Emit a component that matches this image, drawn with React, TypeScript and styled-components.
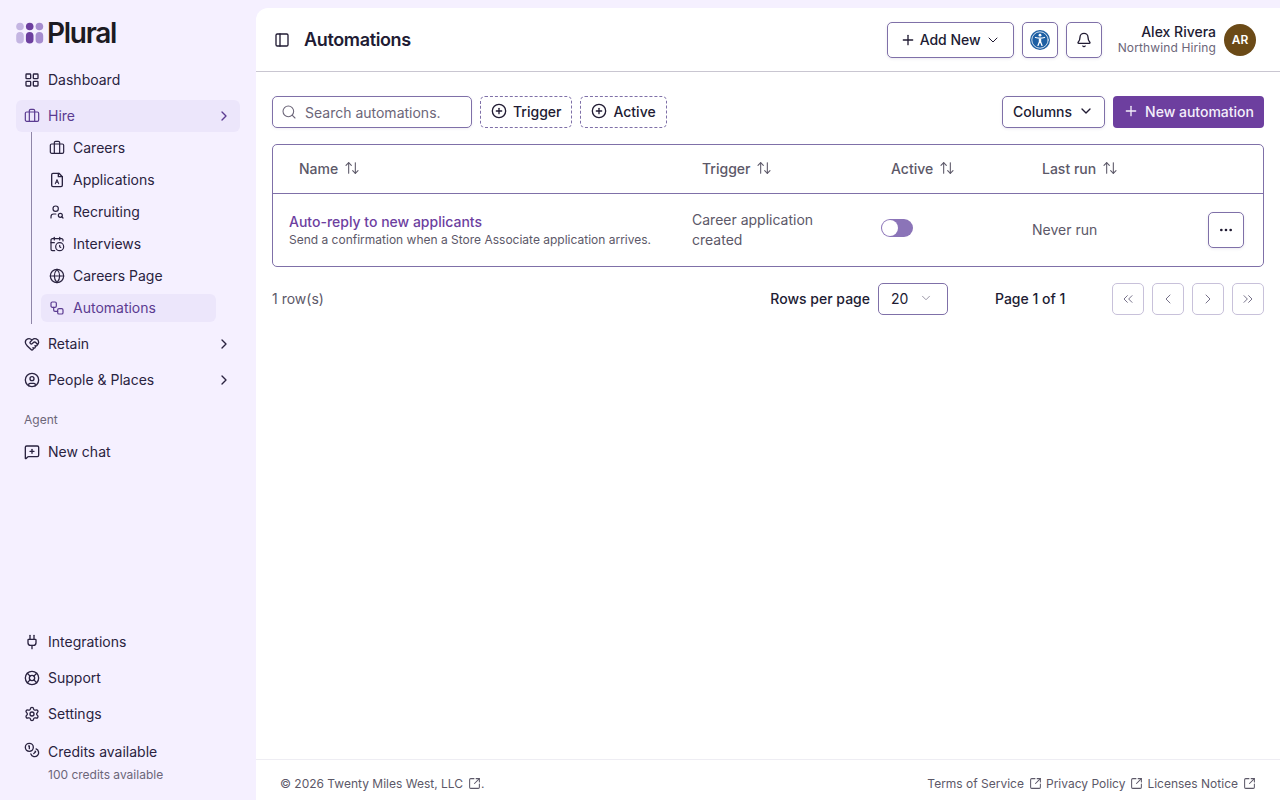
import styled, { createGlobalStyle } from "styled-components";
import {
  ArrowUpDown,
  Bell,
  Briefcase,
  CalendarClock,
  ChevronDown,
  ChevronLeft,
  ChevronRight,
  ChevronsLeft,
  ChevronsRight,
  CirclePlus,
  CircleUser,
  Coins,
  Ellipsis,
  Globe,
  HeartHandshake,
  LayoutGrid,
  LifeBuoy,
  MessageSquarePlus,
  PanelLeft,
  Plug,
  Plus,
  Search,
  Settings,
  SquareArrowOutUpRight,
  UserSearch,
  Workflow,
} from "lucide-react";

const GlobalStyle = createGlobalStyle`
  html, body {
    margin: 0;
    height: 100%;
    overflow: hidden;
    background: #f5f0ff;
    font-family: Inter, "Noto Sans", sans-serif;
    color: #211b33;
  }
  * { box-sizing: border-box; }
`;

const Shell = styled.div`
  display: flex;
  width: 1280px;
  height: 800px;
`;

const Sidebar = styled.aside`
  width: 256px;
  flex: none;
  display: flex;
  flex-direction: column;
  padding: 0 16px;
`;

const LogoRow = styled.div`
  height: 64px;
  display: flex;
  align-items: center;
  gap: 3px;
  padding-top: 2px;
`;

const LogoText = styled.span`
  font-size: 28px;
  font-weight: 600;
  letter-spacing: -1.3px;
  color: #1c1a22;
`;

const Nav = styled.nav`
  display: flex;
  flex-direction: column;
  gap: 4px;
`;

const NavItem = styled.a<{ $active?: boolean }>`
  height: 32px;
  display: flex;
  align-items: center;
  gap: 8px;
  padding: 0 8px;
  border-radius: 6px;
  font-size: 14px;
  color: ${(p) => (p.$active ? "#5b3b91" : "#2a2340")};
  background: ${(p) => (p.$active ? "#ece6fb" : "transparent")};
`;

const NavLabel = styled.span`
  flex: 1;
  margin-top: -2px;
`;

const SubList = styled.div`
  margin: -4px 24px 0 15px;
  padding: 2px 0 2px 9px;
  border-left: 1px solid #8f86a8;
  display: flex;
  flex-direction: column;
  gap: 4px;
`;

const SubItem = styled(NavItem)`
  height: 28px;
`;

const GroupLabel = styled.div`
  font-size: 12px;
  color: #6c6679;
  padding: 0 8px 5px;
  height: 32px;
  display: flex;
  align-items: flex-end;
`;

const Spacer = styled.div`
  flex: 1;
`;

const CreditsBlock = styled.div`
  padding: 12px 8px 17px;
  display: grid;
  grid-template-columns: 16px 1fr;
  column-gap: 8px;
  row-gap: 5px;
`;

const CreditsIcon = styled.div`
  color: #2a2340;
  height: 20px;
`;

const CreditsTitle = styled.div`
  font-size: 14px;
  line-height: 20px;
  color: #2a2340;
`;

const CreditsSub = styled.div`
  grid-column: 2;
  font-size: 12px;
  line-height: 16px;
  color: #6c6679;
`;

const Main = styled.main`
  flex: 1;
  margin-top: 8px;
  background: #fff;
  border-top-left-radius: 12px;
  display: flex;
  flex-direction: column;
  min-width: 0;
`;

const Header = styled.header`
  height: 64px;
  flex: none;
  display: flex;
  align-items: center;
  padding: 0 24px 0 18px;
  border-bottom: 1px solid #c9c6d1;
`;

const Title = styled.h1`
  margin: 0 0 0 14px;
  flex: 1;
  font-size: 18px;
  line-height: 1;
  font-weight: 600;
  letter-spacing: -0.36px;
  color: #211b33;
`;

const OutlineButton = styled.button`
  height: 36px;
  display: inline-flex;
  align-items: center;
  justify-content: center;
  gap: 4px;
  padding: 0 12px;
  background: #fff;
  border: 1px solid #7f70a8;
  border-radius: 5px;
  box-shadow: 0 1px 3px rgba(60, 40, 110, 0.1);
  font: 500 14px Inter, sans-serif;
  color: #211b33;
`;

const HeaderIconButton = styled(OutlineButton)`
  width: 36px;
  padding: 0;
  margin-left: 8px;
`;

const UserBlock = styled.div`
  margin-left: 16px;
  display: flex;
  align-items: center;
  gap: 8px;
`;

const UserText = styled.div`
  text-align: right;
`;

const UserName = styled.div`
  font-size: 14px;
  line-height: 16px;
  font-weight: 500;
  color: #211b33;
`;

const UserOrg = styled.div`
  font-size: 12px;
  line-height: 15px;
  letter-spacing: 0.12px;
  color: #6c6679;
`;

const Avatar = styled.div`
  width: 32px;
  height: 32px;
  border-radius: 50%;
  background: #6b4a17;
  color: #fff;
  font-size: 12px;
  font-weight: 600;
  display: flex;
  align-items: center;
  justify-content: center;
`;

const Content = styled.section`
  flex: 1;
  padding: 24px 16px 0;
  display: flex;
  flex-direction: column;
`;

const Toolbar = styled.div`
  display: flex;
  align-items: center;
  gap: 8px;
  height: 32px;
`;

const SearchBox = styled.div`
  width: 200px;
  height: 32px;
  display: flex;
  align-items: center;
  gap: 8px;
  padding: 0 8px;
  border: 1px solid #7f70a8;
  border-radius: 5px;
  box-shadow: 0 1px 3px rgba(60, 40, 110, 0.08);
  font-size: 14px;
  color: #6c6679;
`;

const FilterButton = styled.button`
  height: 32px;
  display: inline-flex;
  align-items: center;
  gap: 6px;
  padding: 0 10px 2px;
  background: #fff;
  border: 1px dashed #7f70a8;
  border-radius: 5px;
  font: 500 14px Inter, sans-serif;
  color: #211b33;
`;

const ToolbarGap = styled.div`
  flex: 1;
`;

const ColumnsButton = styled(OutlineButton)`
  height: 32px;
  padding: 0 10px 2px;
  gap: 6px;
`;

const PrimaryButton = styled.button`
  height: 32px;
  display: inline-flex;
  align-items: center;
  gap: 6px;
  padding: 0 10px 2px;
  border: none;
  border-radius: 4px;
  background: #6d3f9f;
  color: #f4effb;
  font: 500 14px Inter, sans-serif;
`;

const TableCard = styled.div`
  margin-top: 16px;
  border: 1px solid #7f70a8;
  border-radius: 5px;
`;

const HeadRow = styled.div`
  display: grid;
  grid-template-columns: 403px 189px 151px 1fr;
  height: 49px;
  padding-bottom: 2px;
  align-items: center;
  border-bottom: 1px solid #7f70a8;
`;

const HeadCell = styled.div`
  display: flex;
  align-items: center;
  gap: 6px;
  padding-left: 26px;
  font-size: 14px;
  font-weight: 500;
  color: #5c5868;
`;

const BodyRow = styled.div`
  display: grid;
  grid-template-columns: 403px 189px 151px 1fr;
  height: 72px;
  align-items: center;
`;

const Cell = styled.div`
  padding-left: 16px;
  font-size: 14px;
  line-height: 20px;
  color: #5c5868;
`;

const LastCell = styled(Cell)`
  display: flex;
  align-items: center;
  justify-content: space-between;
  padding-right: 19px;
`;

const RowLink = styled.div`
  font-size: 14px;
  line-height: 18px;
  font-weight: 500;
  color: #6d3f9f;
`;

const RowDesc = styled.div`
  margin-top: 1px;
  font-size: 12px;
  line-height: 16px;
  color: #5c5868;
`;

const Toggle = styled.div`
  width: 32px;
  height: 18px;
  margin-top: -5px;
  border-radius: 9px;
  background: #8b74b8;
  padding: 1px;
`;

const ToggleKnob = styled.div`
  width: 16px;
  height: 16px;
  border-radius: 50%;
  background: #fff;
`;

const RowAction = styled(OutlineButton)`
  width: 36px;
  padding: 0;
`;

const Pager = styled.div`
  margin-top: 16px;
  height: 32px;
  display: flex;
  align-items: center;
  font-size: 14px;
  color: #5c5868;
`;

const RowCount = styled.div`
  flex: 1;
  margin-top: -2px;
`;

const PagerLabel = styled.div`
  margin-top: -2px;
  font-weight: 500;
  color: #211b33;
`;

const RowsSelect = styled.div`
  width: 70px;
  height: 32px;
  margin-left: 8px;
  display: flex;
  align-items: center;
  justify-content: space-between;
  padding: 0 14px 2px 12px;
  border: 1px solid #7f70a8;
  border-radius: 5px;
  color: #211b33;
`;

const PageLabel = styled(PagerLabel)`
  width: 70px;
  margin-left: 47px;
  margin-right: 47px;
  white-space: nowrap;
`;

const PageButtons = styled.div`
  display: flex;
  gap: 8px;
`;

const PageButton = styled.button`
  width: 32px;
  height: 32px;
  display: flex;
  align-items: center;
  justify-content: center;
  padding: 0;
  background: #fff;
  border: 1px solid #c8c1da;
  border-radius: 5px;
  color: #77728a;
`;

const Footer = styled.footer`
  height: 41px;
  flex: none;
  display: flex;
  align-items: center;
  justify-content: space-between;
  padding: 6px 24px 0;
  border-top: 1px solid #eeedf3;
  font-size: 12px;
  color: #5c5868;
`;

const FooterLinks = styled.div`
  display: flex;
  gap: 4px;
`;

const FooterLink = styled.span`
  display: inline-flex;
  align-items: center;
  gap: 5px;
`;

const FooterCopy = styled.div`
  display: flex;
  align-items: center;
`;

function LogoMark() {
  const colors = ["#c4b5e2", "#6d3f9f", "#a68ccf"];
  return (
    <svg width="28" height="24" viewBox="0 0 28 24">
      {colors.map((c, i) => (
        <g key={c} fill={c}>
          <circle cx={4 + i * 9.7} cy={5.5} r={3.8} />
          <rect x={0.2 + i * 9.7} y={11} width={7.6} height={11.5} rx={3.8} />
        </g>
      ))}
    </svg>
  );
}

function FileLetterIcon() {
  return (
    <svg width="16" height="16" viewBox="0 0 24 24" fill="none" stroke="currentColor" strokeWidth="2" strokeLinecap="round" strokeLinejoin="round">
      <path d="M15 2H6a2 2 0 0 0-2 2v16a2 2 0 0 0 2 2h12a2 2 0 0 0 2-2V7z" />
      <path d="M14 2v5h6" />
      <path d="M9.5 17.5 12 11.5l2.5 6M10.4 15.5h3.2" strokeWidth="1.6" />
    </svg>
  );
}

function AccessibilityIcon() {
  return (
    <svg width="20" height="20" viewBox="0 0 20 20" fill="none" stroke="#fff" strokeLinecap="round">
      <circle cx="10" cy="10" r="10" fill="#1d5fa3" stroke="none" />
      <circle cx="10" cy="10" r="8.2" strokeWidth="0.8" />
      <circle cx="10" cy="5.2" r="1.4" fill="#fff" stroke="none" />
      <path d="M5.5 7.5Q10 8.9 14.5 7.5" strokeWidth="1.3" />
      <path d="M10 8.6V11.6" strokeWidth="2.4" strokeLinecap="butt" />
      <path d="M9.6 11.5 8 15.4M10.4 11.5 12 15.4" strokeWidth="1.3" />
    </svg>
  );
}

const Sort = () => <ArrowUpDown size={16} strokeWidth={1.6} />;
const Ext = () => <SquareArrowOutUpRight size={13} strokeWidth={1.9} />;

export default function App() {
  return (
    <>
      <GlobalStyle />
      <Shell>
        <Sidebar>
          <LogoRow>
            <LogoMark />
            <LogoText>Plural</LogoText>
          </LogoRow>
          <Nav>
            <NavItem>
              <LayoutGrid size={16} />
              <NavLabel>Dashboard</NavLabel>
            </NavItem>
            <NavItem $active>
              <Briefcase size={16} strokeWidth={1.8} />
              <NavLabel>Hire</NavLabel>
              <ChevronRight size={16} />
            </NavItem>
            <SubList>
              <SubItem>
                <Briefcase size={16} strokeWidth={1.8} />
                <NavLabel>Careers</NavLabel>
              </SubItem>
              <SubItem>
                <FileLetterIcon />
                <NavLabel>Applications</NavLabel>
              </SubItem>
              <SubItem>
                <UserSearch size={16} strokeWidth={1.8} />
                <NavLabel>Recruiting</NavLabel>
              </SubItem>
              <SubItem>
                <CalendarClock size={16} strokeWidth={1.8} />
                <NavLabel>Interviews</NavLabel>
              </SubItem>
              <SubItem>
                <Globe size={16} strokeWidth={1.8} />
                <NavLabel>Careers Page</NavLabel>
              </SubItem>
              <SubItem $active>
                <Workflow size={16} strokeWidth={1.8} />
                <NavLabel>Automations</NavLabel>
              </SubItem>
            </SubList>
            <NavItem>
              <HeartHandshake size={16} />
              <NavLabel>Retain</NavLabel>
              <ChevronRight size={16} />
            </NavItem>
            <NavItem>
              <CircleUser size={16} />
              <NavLabel>People &amp; Places</NavLabel>
              <ChevronRight size={16} />
            </NavItem>
            <GroupLabel>Agent</GroupLabel>
            <NavItem>
              <MessageSquarePlus size={16} />
              <NavLabel>New chat</NavLabel>
            </NavItem>
          </Nav>
          <Spacer />
          <Nav>
            <NavItem>
              <Plug size={16} />
              <NavLabel>Integrations</NavLabel>
            </NavItem>
            <NavItem>
              <LifeBuoy size={16} />
              <NavLabel>Support</NavLabel>
            </NavItem>
            <NavItem>
              <Settings size={16} />
              <NavLabel>Settings</NavLabel>
            </NavItem>
          </Nav>
          <CreditsBlock>
            <CreditsIcon>
              <Coins size={16} />
            </CreditsIcon>
            <CreditsTitle>Credits available</CreditsTitle>
            <CreditsSub>100 credits available</CreditsSub>
          </CreditsBlock>
        </Sidebar>
        <Main>
          <Header>
            <PanelLeft size={16} />
            <Title>Automations</Title>
            <OutlineButton>
              <Plus size={16} />
              Add New
              <ChevronDown size={16} strokeWidth={1.5} />
            </OutlineButton>
            <HeaderIconButton aria-label="Accessibility">
              <AccessibilityIcon />
            </HeaderIconButton>
            <HeaderIconButton aria-label="Notifications">
              <Bell size={16} />
            </HeaderIconButton>
            <UserBlock>
              <UserText>
                <UserName>Alex Rivera</UserName>
                <UserOrg>Northwind Hiring</UserOrg>
              </UserText>
              <Avatar>AR</Avatar>
            </UserBlock>
          </Header>
          <Content>
            <Toolbar>
              <SearchBox>
                <Search size={16} strokeWidth={1.6} />
                Search automations.
              </SearchBox>
              <FilterButton>
                <CirclePlus size={16} />
                Trigger
              </FilterButton>
              <FilterButton>
                <CirclePlus size={16} />
                Active
              </FilterButton>
              <ToolbarGap />
              <ColumnsButton>
                Columns
                <ChevronDown size={16} />
              </ColumnsButton>
              <PrimaryButton>
                <Plus size={16} />
                New automation
              </PrimaryButton>
            </Toolbar>
            <TableCard>
              <HeadRow>
                <HeadCell>
                  Name <Sort />
                </HeadCell>
                <HeadCell>
                  Trigger <Sort />
                </HeadCell>
                <HeadCell>
                  Active <Sort />
                </HeadCell>
                <HeadCell>
                  Last run <Sort />
                </HeadCell>
              </HeadRow>
              <BodyRow>
                <Cell>
                  <RowLink>Auto-reply to new applicants</RowLink>
                  <RowDesc>Send a confirmation when a Store Associate application arrives.</RowDesc>
                </Cell>
                <Cell>
                  Career application
                  <br />
                  created
                </Cell>
                <Cell>
                  <Toggle>
                    <ToggleKnob />
                  </Toggle>
                </Cell>
                <LastCell>
                  Never run
                  <RowAction aria-label="Actions">
                    <Ellipsis size={16} />
                  </RowAction>
                </LastCell>
              </BodyRow>
            </TableCard>
            <Pager>
              <RowCount>1 row(s)</RowCount>
              <PagerLabel>Rows per page</PagerLabel>
              <RowsSelect>
                20
                <ChevronDown size={14} strokeWidth={1.5} color="#8d889a" />
              </RowsSelect>
              <PageLabel>Page 1 of 1</PageLabel>
              <PageButtons>
                <PageButton aria-label="First page">
                  <ChevronsLeft size={16} strokeWidth={1.5} />
                </PageButton>
                <PageButton aria-label="Previous page">
                  <ChevronLeft size={16} strokeWidth={1.5} />
                </PageButton>
                <PageButton aria-label="Next page">
                  <ChevronRight size={16} strokeWidth={1.5} />
                </PageButton>
                <PageButton aria-label="Last page">
                  <ChevronsRight size={16} strokeWidth={1.5} />
                </PageButton>
              </PageButtons>
            </Pager>
          </Content>
          <Footer>
            <FooterCopy>
              <FooterLink>
                © 2026 Twenty Miles West, LLC <Ext />
              </FooterLink>
              .
            </FooterCopy>
            <FooterLinks>
              <FooterLink>
                Terms of Service <Ext />
              </FooterLink>
              <FooterLink>
                Privacy Policy <Ext />
              </FooterLink>
              <FooterLink>
                Licenses Notice <Ext />
              </FooterLink>
            </FooterLinks>
          </Footer>
        </Main>
      </Shell>
    </>
  );
}
